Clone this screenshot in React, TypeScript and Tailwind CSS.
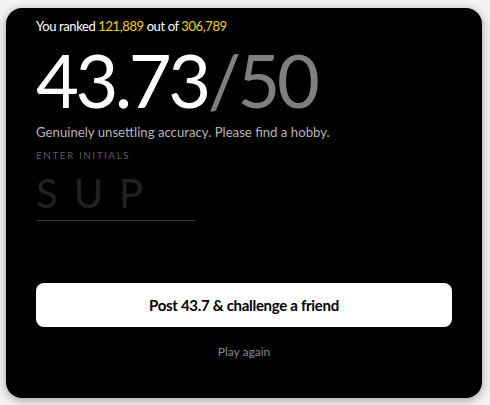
import React from "react";

const App = () => {
  return (
    <div className="w-[490px] h-[405px] bg-[#f2f2f2] pt-2 pl-[6px] font-['Lato','Liberation_Sans',sans-serif]">
      <div className="w-[476px] h-[390px] bg-black rounded-[16px] shadow-[0_2px_10px_rgba(0,0,0,0.35)] px-[30px] pt-[10px] flex flex-col">
        <p className="text-[13px] text-white leading-[16px] tracking-[-0.4px]">
          You ranked <span className="text-[#f5d300]">121,889</span> out of{" "}
          <span className="text-[#f5d300]">306,789</span>
        </p>
        <div className="mt-[6px] text-[74px] font-normal leading-[80px] tracking-[-3.5px] text-white">
          43.73<span className="text-[#7f7f7f]">/50</span>
        </div>
        <p className="mt-[3px] text-[13.2px] leading-[18px] text-[#b5b5b5]">
          Genuinely unsettling accuracy. Please find a hobby.
        </p>
        <p className="mt-[8px] text-[10px] leading-[12px] tracking-[1.5px] text-[#5c5c5c]">ENTER INITIALS</p>
        <input
          className="mt-[10px] w-[160px] bg-transparent border-b border-[#3a3a3a] text-[40px] leading-[44px] tracking-[16px] text-white placeholder:text-[#222222] outline-none pb-[5px]"
          placeholder="SUP"
        />
        <button className="mt-[62px] w-full h-[44px] bg-white rounded-[8px] text-[15px] font-bold text-black tracking-[-0.3px]">
          Post 43.7 &amp; challenge a friend
        </button>
        <button className="mt-[16px] self-center text-[12px] text-[#8a8a8a]">Play again</button>
      </div>
    </div>
  );
};

export default App;
